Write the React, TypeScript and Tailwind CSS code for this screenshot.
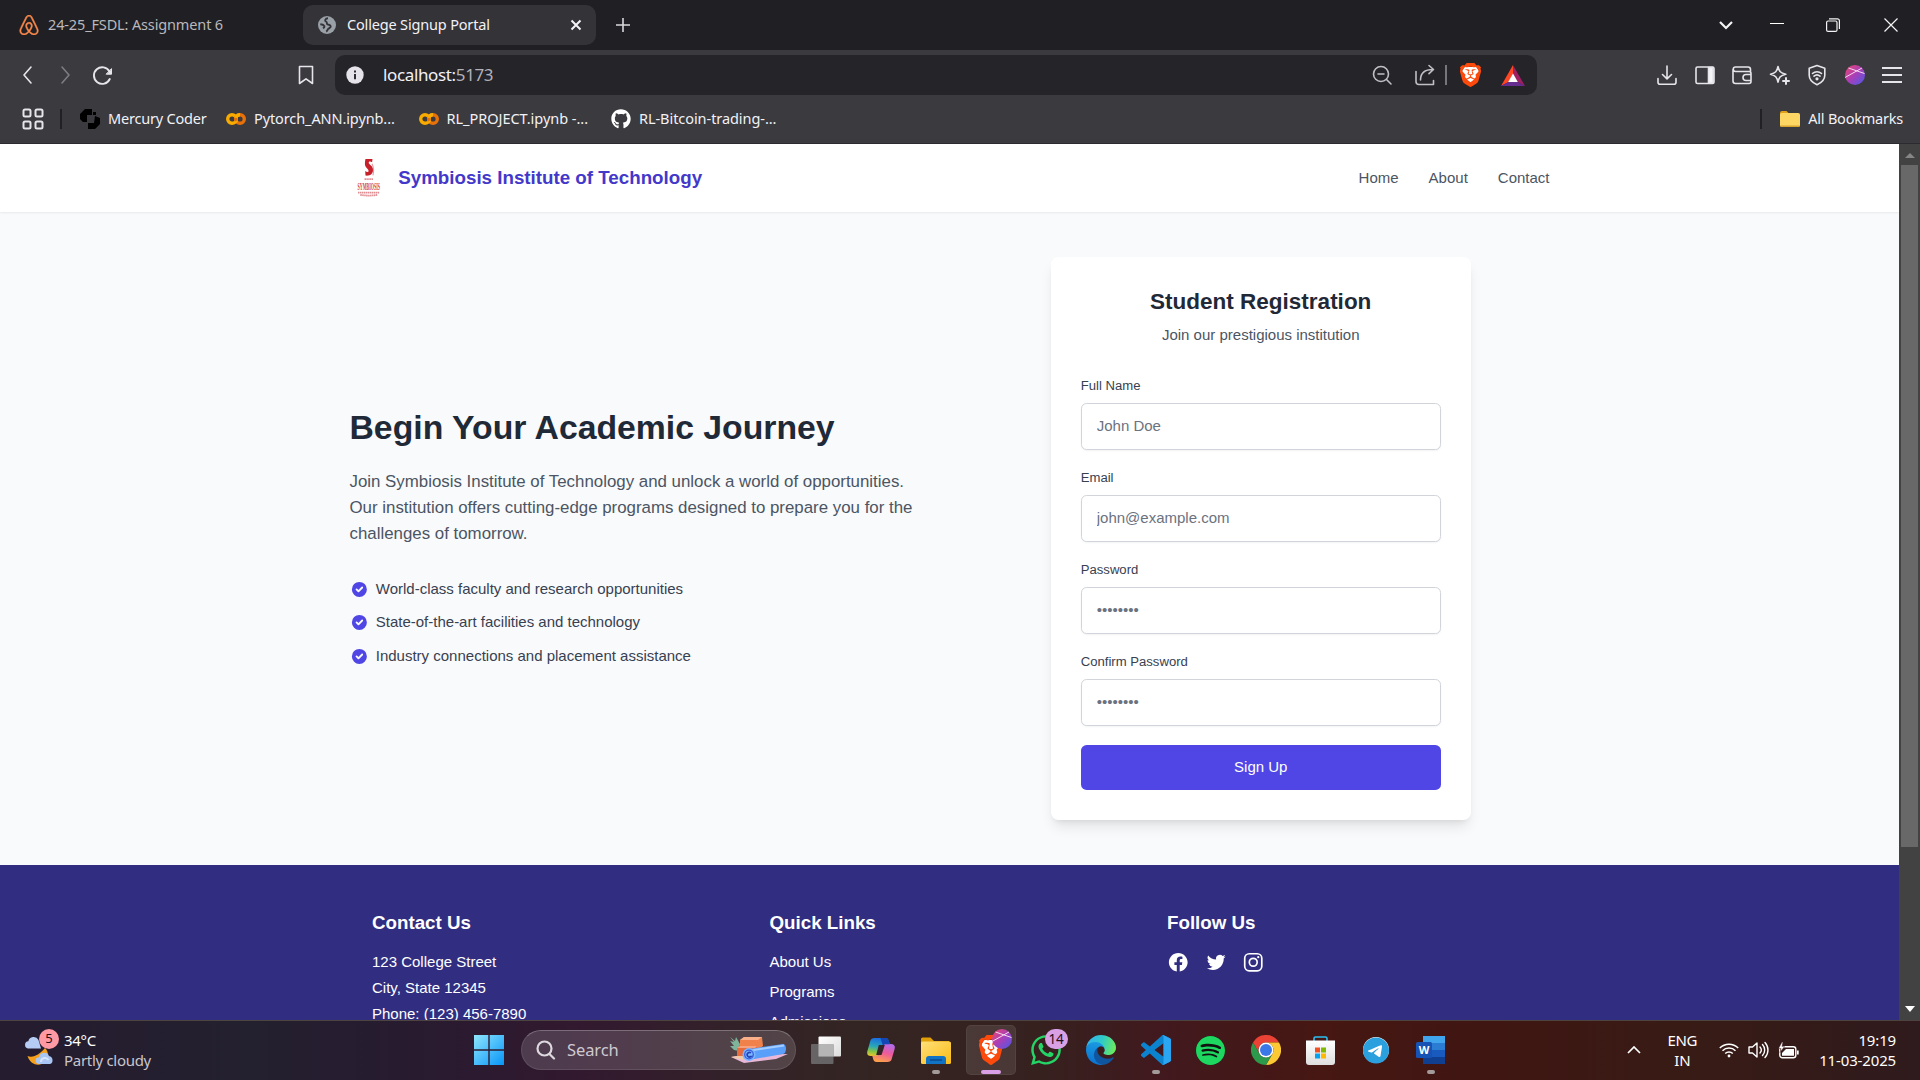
import type { ReactNode } from "react";
import { SiAirbnb, SiBrave, SiSpotify, SiTelegram } from "react-icons/si";
import { FaGithub, FaWhatsapp } from "react-icons/fa";

/* ---------- small drawings ---------- */

const Colab = () => (
  <svg width="20" height="14" viewBox="0 0 20 14" fill="none" strokeWidth="3.4">
    <circle cx="6" cy="7" r="4.3" stroke="#f9ab00" />
    <circle cx="14" cy="7" r="4.3" stroke="#e8710a" />
    <path d="M14 2.700a4.300 4.300 0 0 0-4.200 3.200M10 9.100a4.300 4.300 0 0 0 1 1.300" stroke="#f9ab00" />
  </svg>
);

const BraveLion = ({ w, h }: { w: number; h: number }) => (
  <svg width={w} height={h} viewBox="2 0 20 24" preserveAspectRatio="none">
    <path d="M6 4h12l2 4-2 9-6 5-6-5-2-9z" fill="#fff" />
    <g>
      <SiBrave size={24} color="#fb4a0b" />
    </g>
  </svg>
);

const Avatar = ({ size, id }: { size: number; id: string }) => (
  <svg width={size} height={size} viewBox="0 0 20 20">
    <defs>
      <linearGradient id={id} x1="0" y1="0" x2="1" y2="1">
        <stop offset="0.1" stopColor="#e0447c" />
        <stop offset="0.5" stopColor="#a93fb8" />
        <stop offset="0.9" stopColor="#5b55e0" />
      </linearGradient>
    </defs>
    <circle cx="10" cy="10" r="10" fill={`url(#${id})`} />
    <path d="M3.500 3 19.500 8.500M0 12.500 17 3" stroke="#f4d9ee" strokeWidth="1" fill="none" />
  </svg>
);

const Globe = () => (
  <svg width="18" height="18" viewBox="0 0 18 18">
    <circle cx="9" cy="9" r="9" fill="#9aa0a8" />
    <path d="M10 2.200c-2.800 0-3.600 2.500-2 3.300 1.800.8 0 2.300 1.600 2.900 1.800.6 3 .3 3.100 1.900.1 1.800-2 1.500-2.700 2.900-.4 1-.8 1.900-1.800 2.400M2.300 8.200c1.500.3 3.200.5 4 1.800.4.900-.2 1.700-1.400 2.200" stroke="#343338" strokeWidth="1.900" fill="none" />
  </svg>
);

const Stroke = ({ size = 22, w = 1.6, color = "#e6e5ea", children }: { size?: number; w?: number; color?: string; children: ReactNode }) => (
  <svg width={size} height={size} viewBox="0 0 22 22" fill="none" stroke={color} strokeWidth={w} strokeLinecap="round" strokeLinejoin="round">
    {children}
  </svg>
);

/* ---------- browser chrome ---------- */

const TabStrip = () => (
  <div className="flex h-[50px] items-center bg-[#202024]">
    <div className="flex w-[303px] items-center pl-[19px]">
      <SiAirbnb size={20} color="#fc8a4c" stroke="#fc8a4c" strokeWidth={0.6} />
      <span className="ml-[9px] whitespace-nowrap text-[14.5px] tracking-[-0.14px] text-[#b9b8bd]">24-25_FSDL: Assignment 6</span>
    </div>
    <div className="flex h-10 w-[293px] items-center rounded-[10px] bg-[#343338] pl-[15px] pr-[14px]">
      <Globe />
      <span className="ml-[11px] flex-1 whitespace-nowrap text-[14.5px] tracking-[-0.17px] text-[#f2f1f5]">College Signup Portal</span>
      <svg width="12" height="12" viewBox="0 0 12 12" stroke="#f4f4f6" strokeWidth="2"><path d="M1.500 1.500l9 9M10.500 1.500l-9 9" /></svg>
    </div>
    <svg className="ml-5" width="14" height="14" viewBox="0 0 14 14" stroke="#d9d9dc" strokeWidth="1.600"><path d="M7 0v14M0 7h14" /></svg>
    <div className="ml-auto flex items-center pr-[22px]">
      <svg width="14" height="9" viewBox="0 0 14 9" fill="none" stroke="#f4f4f6" strokeWidth="2.200"><path d="M1 1l6 6 6-6" /></svg>
      <svg className="ml-[37px]" width="14" height="14" viewBox="0 0 14 14" stroke="#fff"><path d="M0 5.500h14" /></svg>
      <svg className="ml-[42px]" width="14" height="14" viewBox="0 0 14 14" fill="none" stroke="#f4f4f6" strokeWidth="1.200">
        <rect x=".6" y="3" width="10.400" height="10.400" rx="1.500" />
        <path d="M3 .8h8.400a2 2 0 0 1 2 2V11" />
      </svg>
      <svg className="ml-11" width="14" height="14" viewBox="0 0 14 14" stroke="#f4f4f6" strokeWidth="1.200"><path d="M.5.500l13 13M13.500.500l-13 13" /></svg>
    </div>
  </div>
);

const Cell = ({ children }: { children: ReactNode }) => <div className="flex w-[37.5px] justify-center">{children}</div>;

const AddressRow = () => (
  <div className="flex h-[50px] items-center">
    <div className="flex w-[335px] items-center pl-[9px]">
      <Cell><Stroke><path d="M14 3L7 11l7 8" /></Stroke></Cell>
      <Cell><Stroke color="#7d7c82"><path d="M8 3l7 8-7 8" /></Stroke></Cell>
      <Cell>
        <Stroke w={1.9}>
          <path d="M17.500 7.500A8.300 8.300 0 1 0 17.800 15" />
          <path d="M19.500 5v5.200h-5z" fill="#e6e5ea" strokeWidth="1" />
        </Stroke>
      </Cell>
      <div className="ml-auto mr-[18px]">
        <Stroke><path d="M4.500 2.500h13v17L11 14.800l-6.500 4.700z" /></Stroke>
      </div>
    </div>
    <div className="flex h-10 w-[1202px] items-center rounded-[10px] bg-[#242429] pl-[11px] pr-[12px]">
      <svg width="18" height="18" viewBox="0 0 18 18"><circle cx="9" cy="9" r="8.700" fill="#e6e3ea" /><path d="M9 8v5.200M9 4.500v2" stroke="#242429" strokeWidth="1.900" /></svg>
      <span className="ml-[19px] text-[17px] tracking-[-0.36px] text-[#f2f1f5]">localhost:<span className="text-[#b3b2b8]">5173</span></span>
      <div className="ml-auto flex items-center">
        <Stroke color="#c0bfc5"><circle cx="10" cy="10" r="7.500" /><path d="M7 10h6M15.500 15.500l4.500 4.500" /></Stroke>
        <div className="ml-[21px]">
          <Stroke color="#c0bfc5"><path d="M2 7.500v10a3 3 0 0 0 3 3h14.500v-4M6.500 16c0-7 4-10.500 12.500-10.500M15 1.500l4.500 4-4.500 4.200" /></Stroke>
        </div>
        <span className="ml-[9px] h-5 w-[2px] bg-[#77767c]" />
        <div className="ml-[13px]"><BraveLion w={21} h={24} /></div>
        <svg className="ml-[20px]" width="24" height="21" viewBox="0 0 24 21">
          <path d="M12 0L0 21l7.500-4L12 9z" fill="#ff4724" />
          <path d="M12 0l12 21-7.500-4L12 9z" fill="#9e1f63" />
          <path d="M0 21h24l-7.500-4h-9z" fill="#662d91" />
          <path d="M12 8.500L7.200 17h9.600z" fill="#fff" />
        </svg>
      </div>
    </div>
    <div className="ml-auto flex items-center pr-[9px]">
      <Cell><Stroke><path d="M11 2v12.500M6.500 10.500l4.500 4.300 4.500-4.300M2 14.500v3.700a2 2 0 0 0 2 2h14a2 2 0 0 0 2-2v-3.700" /></Stroke></Cell>
      <Cell><Stroke><rect x="2" y="3" width="18" height="16.500" rx="1.500" /><path d="M14.500 3.500h4.500v15.500h-4.500z" fill="#f4f4f6" /></Stroke></Cell>
      <Cell><Stroke><path d="M19.500 7.500v-2a2.500 2.500 0 0 0-2.500-2.500H4.500a2.200 2.200 0 0 0 0 4.500H18a2 2 0 0 1 2 2v8a2 2 0 0 1-2 2H4.500a2.500 2.500 0 0 1-2.500-2.500V5.500M20 10.500h-5a3 3 0 0 0 0 6h5" /></Stroke></Cell>
      <Cell><Stroke><path d="M9 2.500c1 5 2.500 6.500 7.800 7.700-5.300 1.200-6.800 3-7.800 8-1-5-2.500-6.800-7.500-8 5-1.200 6.500-2.700 7.500-7.700z" /><path d="M17 14v6M14 17h6" strokeWidth="2" /></Stroke></Cell>
      <Cell><Stroke><path d="M11 1.500l7.800 2.700v7c0 4.500-3.300 7.500-7.800 9.500-4.500-2-7.800-5-7.800-9.500v-7z" /><path d="M6.500 9.500a6.500 6.500 0 0 1 9 0M8 12.200a4.500 4.500 0 0 1 6 0" /><circle cx="11" cy="14.800" r=".8" fill="#e6e5ea" /></Stroke></Cell>
      <Cell><Avatar size={20} id="avA" /></Cell>
      <Cell><svg width="20" height="18" viewBox="0 0 20 18" stroke="#e6e5ea" strokeWidth="2"><path d="M0 2h20M0 9h20M0 16h20" /></svg></Cell>
    </div>
  </div>
);

const Bookmark = ({ w, tracking, icon, children }: { w: string; tracking: string; icon: ReactNode; children: ReactNode }) => (
  <div className={`flex items-center whitespace-nowrap text-[14.5px] text-[#f2f1f5] ${w}`}>
    <span className="flex w-5 justify-center">{icon}</span>
    <span className={`ml-2 ${tracking}`}>{children}</span>
  </div>
);

const BookmarksRow = () => (
  <div className="flex h-[44px] items-center border-b border-[#2c2b30] pb-[5px]">
    <svg className="ml-[22px]" width="22" height="22" viewBox="0 0 22 22" fill="none" stroke="#e6e5ea" strokeWidth="2">
      <rect x="1.500" y="1.500" width="7" height="7" rx="1.500" /><rect x="13.500" y="1.500" width="7" height="7" rx="1.500" />
      <rect x="1.500" y="13.500" width="7" height="7" rx="1.500" /><rect x="13.500" y="13.500" width="7" height="7" rx="1.500" />
    </svg>
    <span className="ml-4 mr-[18px] h-5 w-[2px] bg-[#212025]" />
    <Bookmark
      w="w-[146px]"
      tracking="tracking-[-0.2px]"
      icon={
        <svg width="20" height="20" viewBox="0 0 20 20"><path d="M5 0h7v6H7v7H3L0 10V5zM15 7l5 2v6l-5 5H8v-6h6z" fill="#000" /><path d="M13 6v-3h3v3z" fill="#000" /></svg>
      }
    >
      Mercury Coder
    </Bookmark>
    <Bookmark w="w-[192.5px]" tracking="tracking-[-0.1px]" icon={<Colab />}>Pytorch_ANN.ipynb...</Bookmark>
    <Bookmark w="w-[192.5px]" tracking="tracking-[-0.03px]" icon={<Colab />}>RL_PROJECT.ipynb -...</Bookmark>
    <Bookmark w="w-[170px]" tracking="tracking-[-0.06px]" icon={<FaGithub size={20} color="#fff" />}>RL-Bitcoin-trading-...</Bookmark>
    <div className="ml-auto flex items-center pr-[17px]">
      <span className="mr-[18px] h-5 w-[2px] bg-[#212025]" />
      <svg width="20" height="16" viewBox="0 0 20 16">
        <path d="M0 2a2 2 0 0 1 2-2h4.500l2 2H18v5H0z" fill="#e0a21b" />
        <rect y="2" width="20" height="14" rx="1.800" fill="#fdd663" />
        <path d="M0 14.500h20a1.800 1.800 0 0 1-1.800 1.500H1.800A1.800 1.800 0 0 1 0 14.500z" fill="#d8a32e" />
      </svg>
      <span className="ml-2 whitespace-nowrap text-[14.5px] tracking-[-0.22px] text-[#f2f1f5]">All Bookmarks</span>
    </div>
  </div>
);

/* ---------- web page ---------- */

const CollegeLogo = () => (
  <svg className="h-[37.5px] w-[37.5px]" viewBox="0 0 40 40">
    <path d="M16.500 0h7.500l-.4 3.500c-1.700-1-3.600-1-3.600.4 0 1.900 4.700 3.200 4.700 7.600 0 4-2.700 6.700-8.200 6.200l-.3-5c1.500 1.400 3.600 1.500 3.600 0 0-2.300-3.900-3.200-3.900-7.600 0-2 .2-3.700.6-5.100z" fill="#c8202a" />
    <path d="M23.500 5c1.500 3 2 8 1 12.500" stroke="#e9989c" strokeWidth="1.200" fill="none" />
    <path d="M15.500 21.500h9" stroke="#e08a90" strokeWidth="2" strokeDasharray="1.500 .5" />
    <text x="20" y="33.5" textAnchor="middle" textLength="24" lengthAdjust="spacingAndGlyphs" fontFamily="Liberation Serif, serif" fontWeight="700" fontSize="10.5" fill="#cf4049">SYMBIOSIS</text>
    <path d="M8.500 35.800h23M11 38.200q9 1.600 18 0" stroke="#e08a90" strokeWidth="1.900" strokeDasharray="1.600 .5" fill="none" />
  </svg>
);

const CheckItem = ({ children }: { children: ReactNode }) => (
  <li className="flex h-6 items-center text-[#374151]">
    <svg className="mr-2 h-5 w-5 text-[#4f46e5]" viewBox="0 0 20 20" fill="currentColor">
      <path fillRule="evenodd" clipRule="evenodd" d="M10 18a8 8 0 100-16 8 8 0 000 16zm3.707-9.293a1 1 0 00-1.414-1.414L9 10.586 7.707 9.293a1 1 0 00-1.414 1.414l2 2a1 1 0 001.414 0l4-4z" />
    </svg>
    {children}
  </li>
);

const Field = ({ label, placeholder, type = "text" }: { label: string; placeholder: string; type?: string }) => (
  <div>
    <label className="mb-2 block text-[13.125px] leading-[18.75px] text-[#374151]">{label}</label>
    <input
      type={type}
      placeholder={placeholder}
      className="block h-[47px] w-full rounded-[5.6px] border border-[#d1d5db] bg-white px-4 pb-px text-[15px] shadow-[0_1px_2px_rgba(0,0,0,0.05)] placeholder:text-[#6b7280]"
    />
  </div>
);

const Page = () => (
  <div className="flex-1 overflow-hidden bg-[#f9fafb] font-['Liberation_Sans',Arial,sans-serif] text-[15px] leading-[22.5px] [--spacing:3.75px]">
    <header className="relative bg-white shadow-[0_1px_2px_rgba(0,0,0,0.07)]">
      <div className="mx-auto flex h-[68px] w-[1200px] items-center">
        <CollegeLogo />
        <span className="ml-3 text-[18.75px] font-bold leading-[26.25px] text-[#4338ca]">Symbiosis Institute of Technology</span>
        <nav className="ml-auto flex gap-8 text-[#4b5563]">
          <a>Home</a>
          <a>About</a>
          <a>Contact</a>
        </nav>
      </div>
    </header>

    <main className="mx-auto flex w-[1200px] items-center gap-12 py-12">
      <section className="flex-1">
        <h1 className="mb-6 text-[33.75px] font-bold leading-[37.5px] text-[#1f2937]">Begin Your Academic Journey</h1>
        <p className="mb-8 text-[16.875px] leading-[26.25px] text-[#4b5563]">
          Join Symbiosis Institute of Technology and unlock a world of opportunities. Our institution offers cutting-edge programs designed to prepare you for the challenges of tomorrow.
        </p>
        <ul className="space-y-3">
          <CheckItem>World-class faculty and research opportunities</CheckItem>
          <CheckItem>State-of-the-art facilities and technology</CheckItem>
          <CheckItem>Industry connections and placement assistance</CheckItem>
        </ul>
      </section>
      <section className="flex flex-1 justify-center">
        <div className="w-[420px] rounded-[7.5px] bg-white p-8 shadow-[0_9px_14px_-3px_rgba(0,0,0,0.1),0_4px_6px_-4px_rgba(0,0,0,0.1)]">
          <div className="mb-8 text-center">
            <h2 className="text-[22.5px] font-bold leading-[29.5px] text-[#1f2937]">Student Registration</h2>
            <p className="mt-2 text-[#4b5563]">Join our prestigious institution</p>
          </div>
          <form className="space-y-5">
            <Field label="Full Name" placeholder="John Doe" />
            <Field label="Email" placeholder="john@example.com" type="email" />
            <Field label="Password" placeholder="••••••••" type="password" />
            <Field label="Confirm Password" placeholder="••••••••" type="password" />
            <button type="button" className="h-12 w-full rounded-[5.6px] bg-[#4f46e5] text-white">Sign Up</button>
          </form>
        </div>
      </section>
    </main>

    <footer className="bg-[#312e81] text-white">
      <div className="mx-auto grid w-[1200px] grid-cols-3 gap-10 px-6 py-12">
        <div>
          <h3 className="mb-4 text-[18.75px] font-bold leading-[26.25px]">Contact Us</h3>
          <div className="space-y-1">
            <p>123 College Street</p>
            <p>City, State 12345</p>
            <p>Phone: (123) 456-7890</p>
          </div>
        </div>
        <div>
          <h3 className="mb-4 text-[18.75px] font-bold leading-[26.25px]">Quick Links</h3>
          <div className="space-y-2">
            <p>About Us</p>
            <p>Programs</p>
            <p>Admissions</p>
          </div>
        </div>
        <div>
          <h3 className="mb-4 text-[18.75px] font-bold leading-[26.25px]">Follow Us</h3>
          <div className="flex gap-4">
            <svg className="h-6 w-6" viewBox="0 0 24 24" fill="currentColor">
              <path fillRule="evenodd" clipRule="evenodd" d="M22 12c0-5.523-4.477-10-10-10S2 6.477 2 12c0 4.991 3.657 9.128 8.438 9.878v-6.987h-2.540V12h2.540V9.797c0-2.506 1.492-3.890 3.777-3.890 1.094 0 2.238.195 2.238.195v2.460h-1.260c-1.243 0-1.630.771-1.630 1.562V12h2.773l-.443 2.890h-2.330v6.988C18.343 21.128 22 16.991 22 12z" />
            </svg>
            <svg className="h-6 w-6" viewBox="0 0 24 24" fill="currentColor">
              <path d="M8.290 20.251c7.547 0 11.675-6.253 11.675-11.675 0-.178 0-.355-.012-.530A8.348 8.348 0 0022 5.920a8.190 8.190 0 01-2.357.646 4.118 4.118 0 001.804-2.270 8.224 8.224 0 01-2.605.996 4.107 4.107 0 00-6.993 3.743 11.650 11.650 0 01-8.457-4.287 4.106 4.106 0 001.270 5.477A4.072 4.072 0 012.800 9.713v.052a4.105 4.105 0 003.292 4.022 4.095 4.095 0 01-1.853.070 4.108 4.108 0 003.834 2.850A8.233 8.233 0 012 18.407a11.616 11.616 0 006.290 1.840" />
            </svg>
            <svg className="h-6 w-6" viewBox="0 0 24 24" fill="none" stroke="currentColor" strokeWidth="1.800">
              <rect x="2.900" y="2.900" width="18.200" height="18.200" rx="4.800" />
              <circle cx="12" cy="12" r="4.200" />
              <circle cx="17.340" cy="6.660" r="1.200" fill="currentColor" stroke="none" />
            </svg>
          </div>
        </div>
      </div>
    </footer>
  </div>
);

const Scrollbar = () => (
  <div className="flex w-[21px] flex-col items-center bg-[#424242] pb-[8px] pt-[9px]">
    <svg width="10" height="5" viewBox="0 0 10 5"><path d="M5 0l5 5H0z" fill="#868686" /></svg>
    <div className="mt-[7px] h-[682px] w-[17px] bg-[#686868]" />
    <svg className="mt-auto" width="10" height="6" viewBox="0 0 10 6"><path d="M0 0h10L5 6z" fill="#fff" /></svg>
  </div>
);

/* ---------- taskbar ---------- */

const Slot = ({ children, dot, active }: { children: ReactNode; dot?: boolean; active?: boolean }) => (
  <div className={`relative mx-[2.5px] flex h-[50px] w-[50px] items-center justify-center rounded-[5px] ${active ? "border border-white/5 bg-white/10" : ""}`}>
    {children}
    {dot && <span className="absolute bottom-[1px] h-1 w-2 rounded-full bg-[#a39a9a]" />}
    {active && <span className="absolute bottom-0 h-1 w-5 rounded-full bg-[#d9a0e6]" />}
  </div>
);

const Weather = () => (
  <div className="relative h-[31px] w-[31px]">
    <svg width="31" height="31" viewBox="0 0 31 31">
      <path d="M3.500 21C8 23 14 21 21 13c4 4 4 10 0 14-5 4.500-14 4-17.500-6z" fill="#f6a11c" />
      <path d="M4 13.500a3.700 3.700 0 0 1 .3-7.300A5.500 5.500 0 0 1 14.500 5L17 13.500z" fill="#b5cdf5" />
      <path d="M15 29a3.400 3.400 0 0 1 0-6.800 5.200 5.200 0 0 1 10-1.200 4.200 4.200 0 0 1 1 8z" fill="#a9c5f4" />
      <path d="M17 27a4 4 0 0 1 7.500-2" stroke="#d6e4fb" strokeWidth="2" fill="none" />
    </svg>
    <span className="absolute -right-[4px] -top-[6px] flex h-5 w-5 items-center justify-center rounded-full bg-[#ff99a4] text-[13px] text-[#221018]">5</span>
  </div>
);

const SearchArt = () => (
  <svg width="60" height="28" viewBox="0 0 60 28">
    <path d="M2 21l12-2 45-1-12 5-32 4z" fill="#e9b8d8" />
    <path d="M2 21l12-2v5z" fill="#f2c9a8" />
    <path d="M1 1l5 4 1-4 4 7-1 7-5-1-4-4 4 0-4-5 4 1z" fill="#7fb39a" />
    <path d="M11 4l4-3h18l1 9-5 4H11z" fill="#f0814a" />
    <path d="M11 4l4-3h18l-4 3z" fill="#f9b08a" />
    <path d="M8 12l3-2h17v10H8z" fill="#e86b3c" />
    <path d="M8 12l3-2h17l-2 2z" fill="#f7a27c" />
    <path d="M20 13L54 8c4 0 4 9 0 10l-34 6z" fill="#5aa0fb" />
    <path d="M21 14.500L55 9.500" stroke="#a5cdff" strokeWidth="2" />
    <circle cx="20" cy="18.500" r="6.500" fill="#7db8ff" />
    <circle cx="20" cy="18.500" r="4.300" fill="none" stroke="#3a5fe0" strokeWidth="1.300" />
    <path d="M22 17a2.300 2.300 0 1 0 0 3.500h-1.500" fill="none" stroke="#2440b8" strokeWidth="1.600" />
  </svg>
);

const TaskView = () => (
  <svg width="30" height="28" viewBox="0 0 30 28">
    <defs><linearGradient id="tv" x1="0" y1="0" x2="1" y2="1"><stop stopColor="#fff" /><stop offset="1" stopColor="#dcdcdc" /></linearGradient></defs>
    <rect x="7.500" y=".5" width="22.500" height="20" rx="1" fill="url(#tv)" />
    <rect x="0" y="8" width="22.500" height="20" rx="1" fill="#6b6b6b" opacity=".9" />
    <path d="M7.500 8h15v12.500h-15z" fill="#b5b5b5" />
  </svg>
);

const Copilot = () => (
  <svg width="28" height="26" viewBox="0 0 28 26">
    <defs>
      <linearGradient id="cpA" x1="0.3" y1="0" x2="0.1" y2="1"><stop stopColor="#1b6fe0" /><stop offset=".45" stopColor="#2aa7b8" /><stop offset=".75" stopColor="#8cc63f" /><stop offset="1" stopColor="#f7c52d" /></linearGradient>
      <linearGradient id="cpB" x1="0.8" y1="0" x2="0.4" y2="1"><stop stopColor="#b06cf0" /><stop offset=".5" stopColor="#ee5a9b" /><stop offset="1" stopColor="#fba04c" /></linearGradient>
    </defs>
    <path d="M7.500 1h11c2 0 2.800 1 3.300 3l1 3.200h-3.600c-2 0-3 .8-3.600 2.800L12.500 17c-.7 1.600-1.500 2-3 2H4c-3.200 0-4.400-2-3.600-5L3.300 4C4 1.800 5.200 1 7.500 1z" fill="url(#cpA)" />
    <path d="M20.500 25h-11C7.500 25 6.700 24 6.200 22l-1-3.200h3.900c2 0 3-.8 3.600-2.800L15.500 9c.7-1.600 1.500-2 3-2H24c3.200 0 4.400 2 3.600 5l-2.900 10c-.7 2.200-1.900 3-4.200 3z" fill="url(#cpB)" />
    <path d="M13.500 1h5c2 0 2.800 1 3.300 3l1 3.200h-3.600c-1.500 0-2.500.3-3.200 1.800z" fill="#1546b5" />
    <path d="M11.800 8h6l-3.300 10H9.200z" fill="#33242a" />
  </svg>
);

const Explorer = () => (
  <svg width="30" height="27" viewBox="0 0 30 27">
    <defs><linearGradient id="ex" x1="0" y1="0" x2="1" y2="1"><stop stopColor="#ffe07a" /><stop offset="1" stopColor="#fbbc15" /></linearGradient></defs>
    <path d="M0 2a1.500 1.500 0 0 1 1.500-1.500h8L13 4h15v6H0z" fill="#e2a008" />
    <rect y="4.500" width="30" height="22.500" rx="1.500" fill="url(#ex)" />
    <path d="M5 27v-5a3 3 0 0 1 3-3h14a3 3 0 0 1 3 3v5z" fill="#1272c4" />
    <path d="M9 23h12" stroke="#0a4a8c" strokeWidth="1.500" />
  </svg>
);

const Edge = () => (
  <svg width="30" height="30" viewBox="0 0 256 256">
    <defs>
      <linearGradient id="eg1" x1="0" y1="0.3" x2="1" y2="0.5"><stop stopColor="#35b1f1" /><stop offset=".5" stopColor="#2fc9c9" /><stop offset="1" stopColor="#6bea5e" /></linearGradient>
      <linearGradient id="eg2" x1="0.5" y1="0" x2="0.3" y2="1"><stop stopColor="#1b9de2" /><stop offset="1" stopColor="#0a70d0" /></linearGradient>
    </defs>
    <path d="M231 190.500c-3.400 1.800-6.900 3.400-10.500 4.700a101.700 101.700 0 0 1-35.900 6.400c-47.300 0-88.500-32.500-88.500-74.300a31.500 31.500 0 0 1 16.400-27.300c-42.800 1.800-53.800 46.400-53.800 72.500 0 73.900 68.100 81.400 82.800 81.400 7.900 0 19.800-2.300 27-4.600l1.300-.4a128.300 128.300 0 0 0 66.600-52.800 4 4 0 0 0-5.400-5.600z" fill="#0f55a0" />
    <path d="M105.700 241.400a79.200 79.200 0 0 1-22.700-21.300 80.700 80.700 0 0 1 29.500-120c3.200-1.500 8.500-4.100 15.600-4a32.400 32.400 0 0 1 25.700 13 31.900 31.900 0 0 1 6.300 18.700c0-.2 24.500-79.600-80-79.600-43.900 0-80 41.600-80 78.200a130.200 130.200 0 0 0 12.100 56 128 128 0 0 0 156.400 67 75.500 75.500 0 0 1-62.800-8z" fill="url(#eg2)" />
    <path d="M152.300 148.900c-.9 1-3.400 2.500-3.400 5.600 0 2.600 1.700 5.200 4.800 7.300 14.300 10 41.400 8.600 41.500 8.600a59.600 59.600 0 0 0 30.300-8.300 61.400 61.400 0 0 0 30.400-52.900c.3-22.400-8-37.300-11.300-43.900C223.500 23.900 177.700 0 128 0A128 128 0 0 0 0 126.200c.5-36.500 36.800-66 80-66 3.500 0 23.500.3 42 10.100a72.600 72.600 0 0 1 30.900 29.300c6.100 10.600 7.200 24.100 7.200 29.500s-2.700 13.300-7.800 19.900z" fill="url(#eg1)" />
  </svg>
);

const VSCode = () => (
  <svg width="30" height="30" viewBox="0 0 100 100">
    <path d="M70.900 99.300a6.200 6.200 0 0 0 4.900-.2l20.600-9.900a6.300 6.300 0 0 0 3.500-5.600V16.400a6.300 6.300 0 0 0-3.500-5.600L75.900.9a6.200 6.200 0 0 0-7.100 1.200L29.400 38 12.200 25a4.200 4.200 0 0 0-5.300.2L1.400 30.200a4.200 4.200 0 0 0 0 6.200L16.200 50 1.400 63.600a4.200 4.200 0 0 0 0 6.200l5.500 5a4.200 4.200 0 0 0 5.300.2l17.200-13 39.400 35.900a6.200 6.200 0 0 0 2.100 1.400zM75 27.300L45.100 50 75 72.700z" fillRule="evenodd" fill="#0c83cf" />
    <path d="M75.800 99.100c-2.500 1-5.200.5-7-1.200 2.300 2.200 6.200.6 6.200-2.700V4.800c0-3.300-3.900-4.900-6.200-2.700 1.800-1.700 4.600-2.200 7.100-1.200l20.500 9.900a6.300 6.300 0 0 1 3.500 5.600v67.200a6.300 6.300 0 0 1-3.500 5.600z" fill="#2ba6f3" />
  </svg>
);

const Chrome = () => (
  <svg width="30" height="30" viewBox="0 0 48 48">
    <path d="M24 12h20.800A24 24 0 0 0 3.200 12l10.400 18A12 12 0 0 1 24 12z" fill="#ea4335" />
    <path d="M44.800 12A24 24 0 0 1 24 48l10.400-18A12 12 0 0 0 24 12z" fill="#fcc934" />
    <path d="M3.200 12A24 24 0 0 0 24 48l10.400-18a12 12 0 0 1-20.800 0z" fill="#2d9a4b" />
    <circle cx="24" cy="24" r="12" fill="#fff" />
    <circle cx="24" cy="24" r="9.600" fill="#3b78e7" />
  </svg>
);

const Store = () => (
  <svg width="29" height="29" viewBox="0 0 29 29">
    <defs><linearGradient id="st" x1="0" y1="0" x2="0" y2="1"><stop stopColor="#fff" /><stop offset="1" stopColor="#dedede" /></linearGradient></defs>
    <path d="M8 6V2.500A1.500 1.500 0 0 1 9.500 1h10A1.500 1.500 0 0 1 21 2.500V6" fill="none" stroke="#2cc0f2" strokeWidth="1.600" />
    <path d="M0 4.500h29V26a3 3 0 0 1-3 3H3a3 3 0 0 1-3-3z" fill="url(#st)" />
    <path d="M9 11.500h5v5H9z" fill="#f25022" /><path d="M15 11.500h5v5h-5z" fill="#7fba00" />
    <path d="M9 17.500h5v5H9z" fill="#00a4ef" /><path d="M15 17.500h5v5h-5z" fill="#ffb900" />
  </svg>
);

const Word = () => (
  <svg width="29" height="28" viewBox="0 0 29 28">
    <path d="M7 0h22v7H7z" fill="#41a5ee" /><path d="M7 7h22v7H7z" fill="#2b7cd3" />
    <path d="M7 14h22v7H7z" fill="#185abd" /><path d="M7 21h22v7H7z" fill="#103f91" />
    <rect y="6" width="16" height="16" rx="1.500" fill="#1753b5" />
    <text x="8" y="18" textAnchor="middle" fontFamily="Open Sans, sans-serif" fontSize="11" fontWeight="700" fill="#fff">W</text>
  </svg>
);

const Taskbar = () => (
  <div className="relative flex h-[60px] items-center border-t border-[#4d4440] bg-[linear-gradient(90deg,#251c2f_0px,#23202f_250px,#271b30_400px,#32192f_580px,#33212a_720px,#332523_850px,#36211f_1040px,#41191e_1160px,#461713_1320px,#3f1612_1500px,#381b15_1680px,#2f1a1d_1919px)] pb-px">
    <div className="flex w-[461px] items-center pl-[24px]">
      <Weather />
      <div className="ml-[9px] text-[15px] leading-5 tracking-[-0.3px]">
        <div className="text-white">34°C</div>
        <div className="text-[#c9c5cc]">Partly cloudy</div>
      </div>
    </div>
    <Slot>
      <svg width="30" height="30" viewBox="0 0 30 30">
        <defs><linearGradient id="wn" x1="0" y1="0" x2="1" y2="1"><stop stopColor="#8fe6fd" /><stop offset="1" stopColor="#0795f8" /></linearGradient></defs>
        <path d="M0 0h14.300v14.300H0zM15.700 0H30v14.300H15.700zM0 15.700h14.300V30H0zM15.700 15.700H30V30H15.700z" fill="url(#wn)" />
      </svg>
    </Slot>
    <div className="ml-[5px] flex h-10 w-[275px] items-center rounded-full border border-white/10 border-t-white/25 bg-white/15 pl-[14px] pr-[6px]">
      <svg width="20" height="20" viewBox="0 0 20 20" fill="none" stroke="#dcd8dd" strokeWidth="2.200" strokeLinecap="round"><circle cx="8.500" cy="8.500" r="7" /><path d="M13.500 14l4.500 4.500" /></svg>
      <span className="ml-[11px] flex-1 text-[16.5px] tracking-[-0.1px] text-[#cfc9d1]">Search</span>
      <SearchArt />
    </div>
    <div className="ml-[2px] flex">
      <Slot><TaskView /></Slot>
      <Slot><Copilot /></Slot>
      <Slot dot><Explorer /></Slot>
      <Slot active>
        <BraveLion w={24} h={30} />
        <span className="absolute right-[3px] top-[3px]"><Avatar size={20} id="avB" /></span>
      </Slot>
      <Slot>
        <FaWhatsapp size={34} color="#25d366" />
        <span className="absolute right-[3px] top-[4px] flex h-5 w-[23px] items-center justify-center rounded-full bg-[#d9a0e6] text-[13.5px] tracking-[-0.3px] text-[#1d0f22]">14</span>
      </Slot>
      <Slot><Edge /></Slot>
      <Slot dot><VSCode /></Slot>
      <Slot>
        <span className="relative flex h-[29px] w-[29px] items-center justify-center rounded-full bg-[#111]"><SiSpotify size={29} color="#1ed760" /></span>
      </Slot>
      <Slot><Chrome /></Slot>
      <Slot><Store /></Slot>
      <Slot>
        <span className="flex h-[26px] w-[26px] items-center justify-center rounded-full bg-white"><SiTelegram size={27} color="#2aa1de" /></span>
      </Slot>
      <Slot dot><Word /></Slot>
    </div>
    <div className="ml-auto flex items-center pr-6 text-[15px] leading-5 text-white">
      <svg width="14" height="8" viewBox="0 0 14 8" fill="none" stroke="#fff" strokeWidth="1.700"><path d="M1 7l6-6 6 6" /></svg>
      <div className="ml-[26px] text-center tracking-[-0.3px]">
        <div>ENG</div>
        <div>IN</div>
      </div>
      <div className="ml-[22px] flex items-center gap-[9px]">
        <svg width="20" height="16" viewBox="0 0 20 16" fill="none" stroke="#fff" strokeWidth="1.500">
          <path d="M.8 6a13 13 0 0 1 18.400 0M3.500 8.800a9.200 9.200 0 0 1 13 0M6.200 11.500a5.400 5.400 0 0 1 7.600 0" /><circle cx="10" cy="14" r="1.400" fill="#fff" stroke="none" />
        </svg>
        <svg width="21" height="18" viewBox="0 0 21 18" fill="none" stroke="#fff" strokeWidth="1.400" strokeLinecap="round" strokeLinejoin="round">
          <path d="M1 6h3.500L9 2v14l-4.500-4H1zM12 6a4.500 4.500 0 0 1 0 6M14.500 3.500a8 8 0 0 1 0 11M17 1.500a11 11 0 0 1 0 15" />
        </svg>
        <svg width="21" height="17" viewBox="0 0 21 17" fill="none">
          <rect x="1.800" y="4.800" width="16" height="11" rx="2.500" stroke="#fff" strokeWidth="1.400" />
          <path d="M8 7h8v6.700H4V11z" fill="#fff" /><path d="M19 8.500h1.700v4H19z" fill="#fff" />
          <path d="M4 0L.5 6.500H3L2 10.500 6.500 4.500H4L5 0z" fill="#fff" stroke="#38191a" strokeWidth=".5" />
        </svg>
      </div>
      <div className="ml-5 text-right tracking-[-0.15px]">
        <div>19:19</div>
        <div>11-03-2025</div>
      </div>
    </div>
  </div>
);

export default function App() {
  return (
    <div className="flex h-[1080px] w-[1920px] flex-col overflow-hidden font-['Noto_Sans','Open_Sans',sans-serif]">
      <TabStrip />
      <div className="bg-[#3b3a3f]">
        <AddressRow />
        <BookmarksRow />
      </div>
      <div className="flex h-[876px]">
        <Page />
        <Scrollbar />
      </div>
      <Taskbar />
    </div>
  );
}
